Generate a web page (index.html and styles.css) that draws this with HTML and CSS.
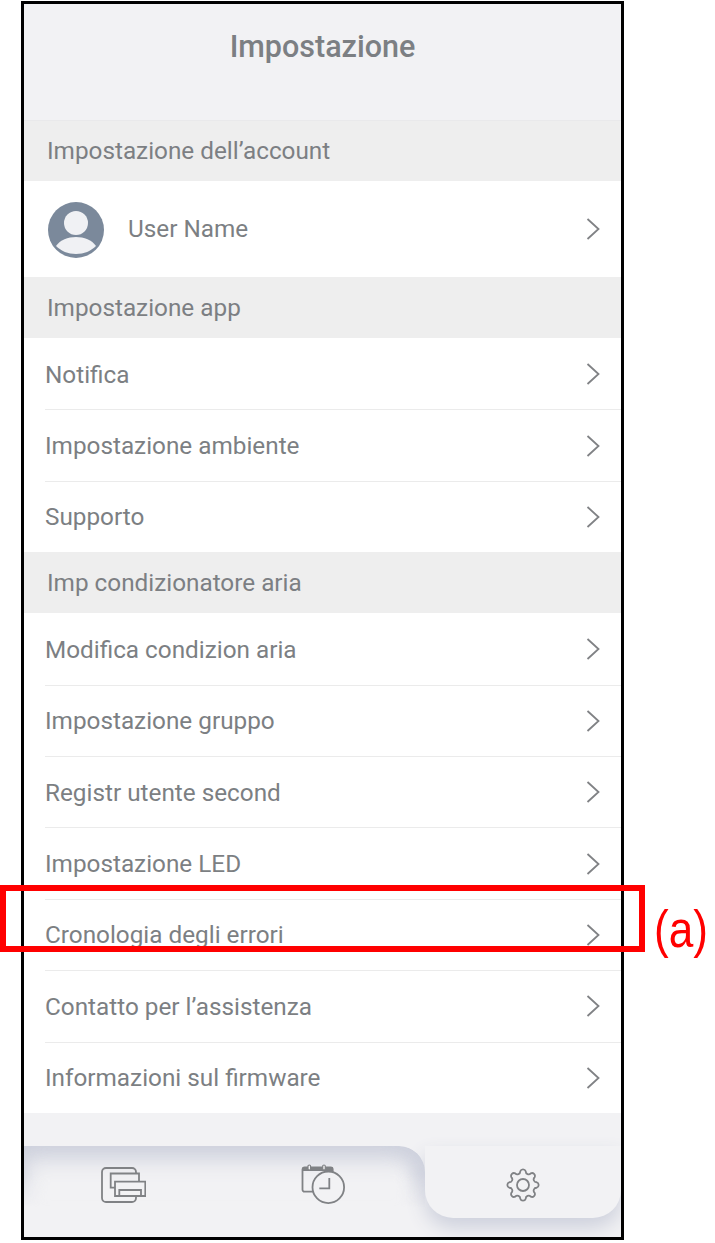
FILE: index.html
```html
<!DOCTYPE html>
<html lang="it">
<head>
    <meta charset="UTF-8">
    <title>Impostazione</title>
    <link rel="stylesheet" href="styles.css">
</head>
<body>
    <div class="phone">
        <div class="header">Impostazione</div>

        <div class="section first">Impostazione dell’account</div>
        <div class="user-row">
            <svg class="avatar" viewBox="0 0 56 56">
                <circle cx="28" cy="28" r="28" fill="#7b899b"/>
                <circle cx="28" cy="21" r="12" fill="#f0f1f4"/>
                <path d="M8 44c4-6 12-9 20-9s16 3 20 9c-5 5-12 8-20 8s-15-3-20-8z" fill="#f0f1f4"/>
            </svg>
            <span class="user-name">User Name</span>
            <svg class="chevron" viewBox="0 0 14 24"><path d="M1.5 2l11 10-11 10"/></svg>
        </div>

        <div class="section">Impostazione app</div>
        <div class="row"><span>Notifica</span><svg class="chevron" viewBox="0 0 14 24"><path d="M1.5 2l11 10-11 10"/></svg></div>
        <div class="row"><span>Impostazione ambiente</span><svg class="chevron" viewBox="0 0 14 24"><path d="M1.5 2l11 10-11 10"/></svg></div>
        <div class="row no-line"><span>Supporto</span><svg class="chevron" viewBox="0 0 14 24"><path d="M1.5 2l11 10-11 10"/></svg></div>

        <div class="section">Imp condizionatore aria</div>
        <div class="row"><span>Modifica condizion aria</span><svg class="chevron" viewBox="0 0 14 24"><path d="M1.5 2l11 10-11 10"/></svg></div>
        <div class="row"><span>Impostazione gruppo</span><svg class="chevron" viewBox="0 0 14 24"><path d="M1.5 2l11 10-11 10"/></svg></div>
        <div class="row"><span>Registr utente second</span><svg class="chevron" viewBox="0 0 14 24"><path d="M1.5 2l11 10-11 10"/></svg></div>
        <div class="row"><span>Impostazione LED</span><svg class="chevron" viewBox="0 0 14 24"><path d="M1.5 2l11 10-11 10"/></svg></div>
        <div class="row"><span>Cronologia degli errori</span><svg class="chevron" viewBox="0 0 14 24"><path d="M1.5 2l11 10-11 10"/></svg></div>
        <div class="row"><span>Contatto per l’assistenza</span><svg class="chevron" viewBox="0 0 14 24"><path d="M1.5 2l11 10-11 10"/></svg></div>
        <div class="row last"><span>Informazioni sul firmware</span><svg class="chevron" viewBox="0 0 14 24"><path d="M1.5 2l11 10-11 10"/></svg></div>

        <div class="footer">
            <div class="tabs">
                <div class="tab-icon">
                    <svg class="icon-devices" viewBox="0 0 45 36">
                        <path d="M21 35H5a4 4 0 0 1-4-4V5a4 4 0 0 1 4-4h26a4 4 0 0 1 4 4v1.500"/>
                        <path d="M14 20.700H9.700V6.500H38v8.200"/>
                        <path d="M14 14.700h30.300V29H14z"/>
                        <path d="M18.300 29v-6H40v6"/>
                        <path d="M35 29v2a4 4 0 0 1-4 4H21"/>
                    </svg>
                </div>
                <div class="tab-icon">
                    <svg class="icon-schedule" viewBox="0 0 45 41">
                        <path d="M13 27.700H3.500a2 2 0 0 1-2-2V5.500a2 2 0 0 1 2-2h26.200a2 2 0 0 1 2 2v4"/>
                        <path d="M1.500 3h30.200v4H1.500z" class="solid"/>
                        <rect x="7" y="1" width="2.600" height="5" rx="1.300" class="post"/>
                        <rect x="21.700" y="1" width="2.600" height="5" rx="1.300" class="post"/>
                        <circle cx="27.300" cy="23.300" r="15.800" class="face"/>
                        <path d="M28.300 14v10.300h-10"/>
                    </svg>
                </div>
            </div>
            <div class="tab-active">
                <svg class="icon-gear" viewBox="0 0 36 36">
                    <circle cx="18" cy="18" r="6"/>
                    <path d="M15.270 4.270A2.900 2.900 0 0 1 20.730 4.270A2.900 2.900 0 0 0 25.780 6.360A2.900 2.900 0 0 1 29.640 10.220A2.900 2.900 0 0 0 31.730 15.270A2.900 2.900 0 0 1 31.730 20.730A2.900 2.900 0 0 0 29.640 25.780A2.900 2.900 0 0 1 25.780 29.640A2.900 2.900 0 0 0 20.730 31.730A2.900 2.900 0 0 1 15.270 31.730A2.900 2.900 0 0 0 10.220 29.640A2.900 2.900 0 0 1 6.360 25.780A2.900 2.900 0 0 0 4.270 20.730A2.900 2.900 0 0 1 4.270 15.270A2.900 2.900 0 0 0 6.360 10.220A2.900 2.900 0 0 1 10.220 6.360A2.900 2.900 0 0 0 15.270 4.270z"/>
                </svg>
            </div>
        </div>
    </div>

    <div class="callout"></div>
    <div class="callout-label">(a)</div>
</body>
</html>
```

FILE: styles.css
```css
body {
    margin: 0;
    background: #fff;
    font-family: Roboto, "Liberation Sans", sans-serif;
    color: #7c7f83;
}

.phone {
    box-sizing: border-box;
    width: 603px;
    height: 1239px;
    margin: 1px 0 0 21px;
    border: 3px solid #000;
    background: #fff;
    display: flex;
    flex-direction: column;
    overflow: hidden;
}

.header {
    height: 117px;
    flex: none;
    box-sizing: border-box;
    padding-top: 24px;
    background: #f2f2f4;
    border-bottom: 1px solid #e9e9eb;
    text-align: center;
    font-size: 30.500px;
    font-weight: 500;
    line-height: 38px;
}

.section {
    height: 61px;
    flex: none;
    box-sizing: border-box;
    padding-left: 23px;
    background: #eeeeee;
    font-size: 24.300px;
    line-height: 61px;
}

.section.first {
    height: 60px;
    line-height: 60px;
}

.user-row {
    height: 96px;
    flex: none;
    display: flex;
    align-items: center;
    padding: 0 21px 0 24px;
}

.avatar {
    width: 56px;
    height: 56px;
    margin-top: 2px;
}

.user-name {
    flex: 1;
    margin: 0 0 2px 24px;
    font-size: 24.300px;
}

.row {
    height: 71.400px;
    flex: none;
    box-sizing: border-box;
    margin-left: 21px;
    padding: 1px 21px 0 0;
    box-shadow: 0 1px 0 #ebebeb;
    display: flex;
    align-items: center;
    justify-content: space-between;
    font-size: 24.300px;
}

.row.no-line {
    box-shadow: none;
}

.row.last {
    margin-left: 0;
    padding-left: 21px;
}

.chevron {
    width: 14px;
    height: 24px;
    fill: none;
    stroke: #808285;
    stroke-width: 1.800;
}

.footer {
    flex: 1;
    display: flex;
    align-items: flex-start;
    background: #f2f2f4;
    padding-top: 33px;
    overflow: hidden;
}

.tabs {
    flex: 1;
    height: 72px;
    position: relative;
    display: flex;
    padding: 6px 2px 0 0;
    box-sizing: border-box;
}

/* soft shadow along the top and right of the tab bar, fades out downwards */
.tabs::before {
    content: "";
    position: absolute;
    inset: 0;
    border-top-right-radius: 26px;
    box-shadow: inset 0 12px 24px #cdd0dc, inset -10px 0 20px #d6d8e2;
    -webkit-mask-image: linear-gradient(to bottom, #000 40%, transparent 85%);
    mask-image: linear-gradient(to bottom, #000 40%, transparent 85%);
}

.tab-icon {
    flex: 1;
    position: relative;
    display: flex;
    align-items: center;
    justify-content: center;
}

.tab-active {
    width: 196px;
    height: 72px;
    box-sizing: border-box;
    padding-top: 6px;
    display: flex;
    align-items: center;
    justify-content: center;
    background: #f2f2f4;
    border-bottom-left-radius: 28px;
    border-bottom-right-radius: 28px;
    box-shadow: 0 10px 20px #cdd0dc;
}

.tab-icon svg, .tab-active svg {
    fill: none;
    stroke: #808285;
    stroke-width: 1.800;
}

.icon-devices {
    width: 45px;
    height: 36px;
}

.icon-schedule {
    width: 45px;
    height: 41px;
}

.icon-gear {
    width: 36px;
    height: 36px;
}

.tab-icon .solid {
    fill: #808285;
    stroke: none;
}

.tab-icon .post {
    fill: #f2f2f4;
    stroke-width: 1.200;
}

.tab-icon .face {
    fill: #f2f2f4;
}

/* annotation on top of the screenshot */
.callout {
    position: absolute;
    left: 0;
    top: 885px;
    width: 645px;
    height: 67px;
    box-sizing: border-box;
    border: 6px solid #ff0000;
}

.callout-label {
    position: absolute;
    left: 654px;
    top: 899px;
    font-family: "Liberation Sans", Arial, sans-serif;
    font-size: 52px;
    line-height: 60px;
    color: #ff0000;
    transform: scaleX(0.85);
    transform-origin: left center;
}
```
